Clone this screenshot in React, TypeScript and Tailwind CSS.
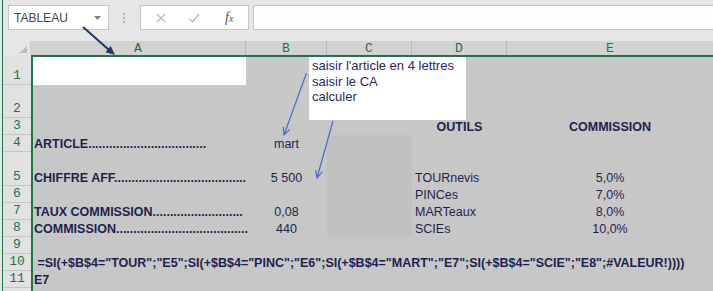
import React from "react";

const INK = "text-[#1f1f4f]";

function RowHead({ h, n }: { h: string; n: string }) {
  return (
    <div className={`${h} shrink-0 border-b border-[#c4c4c4] flex items-end justify-center font-['Liberation_Mono',monospace] text-[13px] leading-[16px] text-[#217346]`}>
      {n}
    </div>
  );
}

function Cell({ w, cls, children }: { w: string; cls?: string; children?: React.ReactNode }) {
  return <div className={`${w} shrink-0 h-full flex items-end ${cls ?? ""}`}>{children}</div>;
}

export default function App() {
  const dots = (n: number) => ".".repeat(n);
  return (
    <div className="w-[713px] h-[291px] overflow-hidden relative bg-[#e6e6e6] pl-[3px] shadow-[inset_2px_0_0_#e6e6e6,inset_3px_0_0_#217346] font-['Liberation_Sans',Arial,sans-serif]">
      {/* Formula bar */}
      <div className="h-[41px] flex items-start pt-[5px]">
        <div className="ml-[5px] w-[101px] h-[25px] shrink-0 bg-white border border-[#c6c6c6] flex items-center justify-between pl-[5px] pr-[7px]">
          <span className="text-[12px] leading-none text-[#444]">TABLEAU</span>
          <svg width="7" height="4" viewBox="0 0 7 4">
            <path d="M0 0H7L3.5 4Z" fill="#7f7f7f" />
          </svg>
        </div>
        <div className="ml-[14px] mt-[8px] flex flex-col gap-[2px] shrink-0">
          <div className="w-[2px] h-[2px] bg-[#b3b3b3]" />
          <div className="w-[2px] h-[2px] bg-[#b3b3b3]" />
          <div className="w-[2px] h-[2px] bg-[#b3b3b3]" />
        </div>
        <div className="ml-[15px] w-[109px] h-[25px] shrink-0 bg-white border border-[#c6c6c6] flex items-center pl-[15px]">
          <svg width="10" height="10" viewBox="0 0 10 10">
            <path d="M1 1L9 9M9 1L1 9" stroke="#bdbdbd" strokeWidth="1.4" fill="none" />
          </svg>
          <svg className="ml-[22px]" width="12" height="10" viewBox="0 0 12 10">
            <path d="M1 5.5L4.5 9L11 1" stroke="#bdbdbd" strokeWidth="1.4" fill="none" />
          </svg>
          <span className="ml-[25px] font-['Liberation_Serif',serif] italic text-[14px] leading-none text-[#555]">
            f<span className="text-[10px]">x</span>
          </span>
        </div>
        <div className="ml-[4px] flex-1 h-[25px] bg-[#fdfdfd] border border-r-0 border-[#c6c6c6]" />
      </div>

      {/* Column headers */}
      <div className="h-[14px] flex font-['Liberation_Mono',monospace] text-[13px] leading-[15px] text-[#217346]">
        <div className="w-[28px] shrink-0 bg-[#e6e6e6] border-r border-[#cdcdcd] flex items-end justify-end pr-[3px] pb-[2px]">
          <svg width="8" height="7" viewBox="0 0 8 7">
            <path d="M8 0V7H0Z" fill="#bdbdbd" />
          </svg>
        </div>
        <div className="w-[215px] shrink-0 bg-[#d2d2d2] border-r border-[#b9b9b9] flex justify-center">A</div>
        <div className="w-[81px] shrink-0 bg-[#d2d2d2] border-r border-[#b9b9b9] flex justify-center">B</div>
        <div className="w-[85px] shrink-0 bg-[#d2d2d2] border-r border-[#b9b9b9] flex justify-center">C</div>
        <div className="w-[95px] shrink-0 bg-[#d2d2d2] border-r border-[#b9b9b9] flex justify-center">D</div>
        <div className="flex-1 bg-[#d2d2d2] flex justify-center">E</div>
      </div>

      {/* Body */}
      <div className="flex h-[236px]">
        <div className="w-[28px] shrink-0 pt-[2px] bg-[#e1e1e1] flex flex-col">
          <RowHead h="h-[28px]" n="1" />
          <RowHead h="h-[33px]" n="2" />
          <RowHead h="h-[17px]" n="3" />
          <RowHead h="h-[17px]" n="4" />
          <RowHead h="h-[34px]" n="5" />
          <RowHead h="h-[17px]" n="6" />
          <RowHead h="h-[17px]" n="7" />
          <RowHead h="h-[17px]" n="8" />
          <RowHead h="h-[17px]" n="9" />
          <RowHead h="h-[17px]" n="10" />
          <RowHead h="h-[17px]" n="11" />
        </div>
        <div className={`flex-1 border-l-2 border-t-2 border-[#217346] bg-[#c7c7c7] flex flex-col text-[12.5px] leading-[15px] ${INK}`}>
          {/* 1 */}
          <div className="h-[28px] shrink-0 flex bg-[#c8c8c8]">
            <Cell w="w-[213px]" cls="bg-white" />
          </div>
          {/* 2 */}
          <div className="h-[33px] shrink-0 flex bg-[#c8c8c8]" />
          {/* 3 */}
          <div className="h-[17px] shrink-0 flex font-bold">
            <Cell w="w-[213px]" />
            <Cell w="w-[81px]" />
            <Cell w="w-[85px]" />
            <Cell w="w-[95px]" cls="justify-center">OUTILS</Cell>
            <div className="flex-1 h-full flex items-end justify-center">COMMISSION</div>
          </div>
          {/* 4 */}
          <div className="h-[17px] shrink-0 flex">
            <Cell w="w-[213px]" cls="pl-[1px] font-bold whitespace-nowrap">{"ARTICLE" + dots(34)}</Cell>
            <Cell w="w-[81px]" cls="justify-center">mart</Cell>
            <Cell w="w-[85px]" cls="bg-[#c1c1c1]" />
          </div>
          {/* 5 */}
          <div className="h-[34px] shrink-0 flex">
            <Cell w="w-[213px]" cls="pl-[1px] font-bold whitespace-nowrap">{"CHIFFRE AFF" + dots(38)}</Cell>
            <Cell w="w-[81px]" cls="justify-center">5 500</Cell>
            <Cell w="w-[85px]" cls="bg-[#c1c1c1]" />
            <Cell w="w-[95px]" cls="pl-[3px]">TOURnevis</Cell>
            <div className="flex-1 h-full flex items-end justify-center">5,0%</div>
          </div>
          {/* 6 */}
          <div className="h-[17px] shrink-0 flex">
            <Cell w="w-[213px]" />
            <Cell w="w-[81px]" />
            <Cell w="w-[85px]" cls="bg-[#c1c1c1]" />
            <Cell w="w-[95px]" cls="pl-[3px]">PINCes</Cell>
            <div className="flex-1 h-full flex items-end justify-center">7,0%</div>
          </div>
          {/* 7 */}
          <div className="h-[17px] shrink-0 flex">
            <Cell w="w-[213px]" cls="pl-[1px] font-bold whitespace-nowrap">{"TAUX COMMISSION" + dots(26)}</Cell>
            <Cell w="w-[81px]" cls="justify-center">0,08</Cell>
            <Cell w="w-[85px]" cls="bg-[#c1c1c1]" />
            <Cell w="w-[95px]" cls="pl-[3px]">MARTeaux</Cell>
            <div className="flex-1 h-full flex items-end justify-center">8,0%</div>
          </div>
          {/* 8 */}
          <div className="h-[17px] shrink-0 flex">
            <Cell w="w-[213px]" cls="pl-[1px] font-bold whitespace-nowrap">{"COMMISSION" + dots(38)}</Cell>
            <Cell w="w-[81px]" cls="justify-center">440</Cell>
            <Cell w="w-[85px]" cls="bg-[#c1c1c1]" />
            <Cell w="w-[95px]" cls="pl-[3px]">SCIEs</Cell>
            <div className="flex-1 h-full flex items-end justify-center">10,0%</div>
          </div>
          {/* 9 */}
          <div className="h-[17px] shrink-0" />
          {/* 10 */}
          <div className="h-[17px] shrink-0 flex">
            <Cell w="w-[213px]" cls="pl-[1px] font-bold whitespace-pre">
              {' =SI(+$B$4="TOUR";"E5";SI(+$B$4="PINC";"E6";SI(+$B$4="MART";"E7";SI(+$B$4="SCIE";"E8";#VALEUR!))))'}
            </Cell>
          </div>
          {/* 11 */}
          <div className="h-[17px] shrink-0 flex">
            <Cell w="w-[213px]" cls="pl-[1px] font-bold">E7</Cell>
          </div>
          <div className="flex-1" />
        </div>
      </div>

      {/* Text box shape */}
      <div className="absolute left-[309px] top-[57px] w-[157px] h-[63px] bg-white pl-[3px] pt-[1px] text-[13px] leading-[15.5px] text-[#2a2a5a] whitespace-nowrap">
        <div>saisir l'article en 4 lettres</div>
        <div>saisir le CA</div>
        <div>calculer</div>
      </div>

      {/* Arrows */}
      <svg className="absolute left-0 top-0 pointer-events-none" width="713" height="291" viewBox="0 0 713 291">
        <line x1="83" y1="27" x2="108.5" y2="49.5" stroke="#1f3864" strokeWidth="2" />
        <path d="M115 55L105.5 52.3L110.7 46.1Z" fill="#1f3864" />
        <path d="M306.5 73L284 135M289.7 129.3L284 135L283.3 127" stroke="#4a6cc2" strokeWidth="1.2" fill="none" />
        <path d="M333 121L317 178M322.2 171.9L317 178L315.7 170.1" stroke="#4a6cc2" strokeWidth="1.2" fill="none" />
      </svg>
    </div>
  );
}
